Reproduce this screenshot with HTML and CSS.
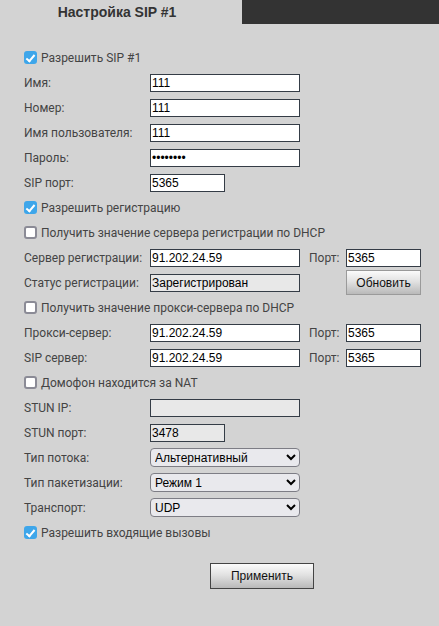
FILE: index.html
```html
<!DOCTYPE html>
<html lang="ru">
<head>
<meta charset="utf-8">
<title>Настройка SIP #1</title>
<link rel="stylesheet" href="styles.css">
</head>
<body>
<div class="tabs">
  <div class="tab active">Настройка SIP #1</div>
  <div class="tab-rest"></div>
</div>
<form class="form">
  <label class="row check"><input type="checkbox" class="cb" checked><span>Разрешить SIP #1</span></label>
  <div class="row"><span class="lbl">Имя:</span><input class="txt" type="text" value="111"></div>
  <div class="row"><span class="lbl">Номер:</span><input class="txt" type="text" value="111"></div>
  <div class="row"><span class="lbl">Имя пользователя:</span><input class="txt" type="text" value="111"></div>
  <div class="row"><span class="lbl">Пароль:</span><input class="txt pwd" type="password" value="12345678"></div>
  <div class="row"><span class="lbl">SIP порт:</span><input class="txt short" type="text" value="5365"></div>
  <label class="row check"><input type="checkbox" class="cb" checked><span>Разрешить регистрацию</span></label>
  <label class="row check"><input type="checkbox" class="cb"><span>Получить значение сервера регистрации по DHCP</span></label>
  <div class="row"><span class="lbl">Сервер регистрации:</span><input class="txt" type="text" value="91.202.24.59"><span class="port-lbl">Порт:</span><input class="txt short" type="text" value="5365"></div>
  <div class="row"><span class="lbl">Статус регистрации:</span><input class="txt dis" type="text" value="Зарегистрирован" readonly><button type="button" class="btn refresh">Обновить</button></div>
  <label class="row check"><input type="checkbox" class="cb"><span>Получить значение прокси-сервера по DHCP</span></label>
  <div class="row"><span class="lbl">Прокси-сервер:</span><input class="txt" type="text" value="91.202.24.59"><span class="port-lbl">Порт:</span><input class="txt short" type="text" value="5365"></div>
  <div class="row"><span class="lbl">SIP сервер:</span><input class="txt" type="text" value="91.202.24.59"><span class="port-lbl">Порт:</span><input class="txt short" type="text" value="5365"></div>
  <label class="row check"><input type="checkbox" class="cb"><span>Домофон находится за NAT</span></label>
  <div class="row"><span class="lbl">STUN IP:</span><input class="txt dis" type="text" value="" readonly></div>
  <div class="row"><span class="lbl">STUN порт:</span><input class="txt short dis" type="text" value="3478" readonly></div>
  <div class="row"><span class="lbl">Тип потока:</span><select class="sel"><option>Альтернативный</option></select></div>
  <div class="row"><span class="lbl">Тип пакетизации:</span><select class="sel"><option>Режим 1</option></select></div>
  <div class="row"><span class="lbl">Транспорт:</span><select class="sel"><option>UDP</option></select></div>
  <label class="row check"><input type="checkbox" class="cb" checked><span>Разрешить входящие вызовы</span></label>
  <div class="actions"><button type="button" class="btn apply">Применить</button></div>
</form>
</body>
</html>
```
FILE: styles.css
```css
* { box-sizing: border-box; }
html, body { margin: 0; padding: 0; }
body {
  background: #d3d3d3;
  width: 439px;
  height: 626px;
  overflow: hidden;
  font-family: Roboto, "Liberation Sans", sans-serif;
  color: #444;
}
.tabs {
  display: flex;
  height: 24px;
}
.tab {
  width: 242px;
  display: flex;
  align-items: center;
  justify-content: center;
  padding-right: 8px;
  font-family: "Liberation Sans", Arial, sans-serif;
  font-weight: bold;
  font-size: 14px;
  color: #333;
}
.tab-rest {
  flex: 1;
  background: #333;
}
.form {
  padding: 21px 0 0 24px;
  display: flex;
  flex-direction: column;
}
.row {
  height: 25px;
  display: flex;
  align-items: center;
  font-size: 12px;
  white-space: nowrap;
}
.lbl {
  width: 126px;
  flex: none;
}
.check { gap: 4px; cursor: default; }
.cb {
  appearance: none;
  -webkit-appearance: none;
  margin: 0;
  width: 13px;
  height: 13px;
  border-radius: 3px;
  border: 2px solid #8b8b96;
  background: #fff;
  flex: none;
  position: relative;
}
.cb:checked {
  border: none;
  background: #3ea6ea;
}
.cb:checked::after {
  content: "";
  position: absolute;
  left: 4px;
  top: 1.5px;
  width: 3px;
  height: 7px;
  border: solid #fff;
  border-width: 0 2px 2px 0;
  transform: rotate(40deg);
}
.txt {
  width: 150px;
  height: 18px;
  margin: 0;
  padding: 0 1px;
  border: 1px solid #343c46;
  background: #fff;
  font-family: "Liberation Sans", Arial, sans-serif;
  font-size: 12px;
  color: #000;
  outline: none;
}
.txt.short { width: 75px; }
.txt.dis { background: #e8e8e8; }
.port-lbl {
  width: 46px;
  padding-left: 9px;
  flex: none;
}
.sel {
  width: 150px;
  height: 19px;
  margin: 0;
  font-family: "Liberation Sans", Arial, sans-serif;
  font-size: 12px;
  color: #000;
  background: #e9e9ed;
  border: 1px solid #7d7d85;
  border-radius: 4px;
}
.btn {
  font-family: "Liberation Sans", Arial, sans-serif;
  font-size: 12px;
  color: #111;
  background: linear-gradient(#fbfbfb, #e2e2e2 45%, #b9b9b9);
  border: 1px solid #444;
  border-radius: 0;
  padding: 0;
}
.refresh {
  margin-left: 46px;
  width: 75px;
  height: 25px;
  border-color: #9a9a9a;
}
.actions {
  padding: 18px 0 0 186px;
}
.apply {
  width: 104px;
  height: 26px;
}
```
